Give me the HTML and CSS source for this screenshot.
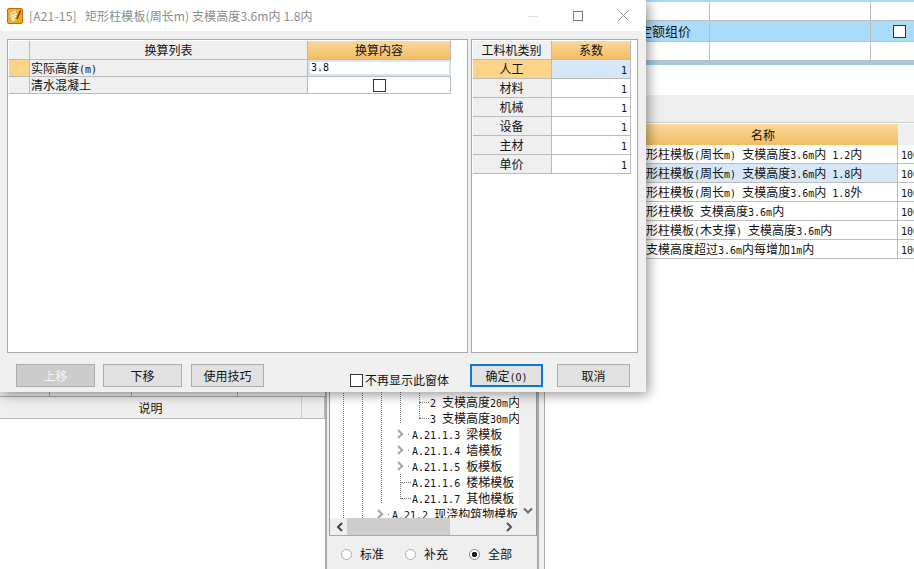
FILE: index.html
```html
<!DOCTYPE html>
<html lang="en">
<head>
    <meta charset="UTF-8">
    <title>换算</title>
    <link rel="stylesheet" href="styles.css">
</head>
<body>
<!-- windows behind the dialog -->
<div id="topWin">
    <div class="tRow"><span class="c1"></span><span class="c2"></span><span class="c3"></span></div>
    <div class="tRow sel"><span class="c1"><span class="clip">定额组价</span></span><span class="c2"></span><span class="c3"><i class="chk"></i></span></div>
    <div class="tRow"><span class="c1"></span><span class="c2"></span><span class="c3"></span></div>
</div>
<div id="greyBand"></div>
<div id="nameWin">
    <div class="nHead"><span class="nName">名称</span><span class="nVal"></span></div>
    <div class="nRow"><span class="nName">形柱模板<b>(</b>周长<b>m) </b>支模高度<b>3.6m</b>内<b> 1.2</b>内</span><span class="nVal"><b>100</b></span></div>
    <div class="nRow on"><span class="nName">形柱模板<b>(</b>周长<b>m) </b>支模高度<b>3.6m</b>内<b> 1.8</b>内</span><span class="nVal"><b>100</b></span></div>
    <div class="nRow"><span class="nName">形柱模板<b>(</b>周长<b>m) </b>支模高度<b>3.6m</b>内<b> 1.8</b>外</span><span class="nVal"><b>100</b></span></div>
    <div class="nRow"><span class="nName">形柱模板<b> </b>支模高度<b>3.6m</b>内</span><span class="nVal"><b>100</b></span></div>
    <div class="nRow"><span class="nName">形柱模板<b>(</b>木支撑<b>) </b>支模高度<b>3.6m</b>内</span><span class="nVal"><b>100</b></span></div>
    <div class="nRow"><span class="nName">支模高度超过<b>3.6m</b>内每增加<b>1m</b>内</span><span class="nVal"><b>100</b></span></div>
</div>
<div id="descWin">
    <div class="ticks"><span class="t1"></span><span class="t2"></span><span class="t3"></span></div>
    <div class="dHead"><span class="dMain">说明</span><span class="dEnd"></span></div>
</div>
<div id="treeWin">
    <div class="treeMain">
        <div class="treeBox">
            <div class="treeTop">
                <ul class="tree">
                    <li class="l5"><u></u><b>2 </b>支模高度<b>20m</b>内</li>
                    <li class="l5"><u></u><b>3 </b>支模高度<b>30m</b>内</li>
                    <li class="l4"><svg class="chev" width="13" height="10" viewBox="0 0 13 10"><path d="M1 1l4 4-4 4" fill="none" stroke="#aaa" stroke-width="2.4"/><rect x="11" y="5" width="1" height="1" fill="#777"/></svg><b>A.21.1.3 </b>梁模板</li>
                    <li class="l4"><svg class="chev" width="13" height="10" viewBox="0 0 13 10"><path d="M1 1l4 4-4 4" fill="none" stroke="#aaa" stroke-width="2.4"/><rect x="11" y="5" width="1" height="1" fill="#777"/></svg><b>A.21.1.4 </b>墙模板</li>
                    <li class="l4"><svg class="chev" width="13" height="10" viewBox="0 0 13 10"><path d="M1 1l4 4-4 4" fill="none" stroke="#aaa" stroke-width="2.4"/><rect x="11" y="5" width="1" height="1" fill="#777"/></svg><b>A.21.1.5 </b>板模板</li>
                    <li class="l4"><u></u><b>A.21.1.6 </b>楼梯模板</li>
                    <li class="l4"><u></u><b>A.21.1.7 </b>其他模板</li>
                    <li class="l3"><svg class="chev" width="13" height="10" viewBox="0 0 13 10"><path d="M1 1l4 4-4 4" fill="none" stroke="#aaa" stroke-width="2.4"/><rect x="11" y="5" width="1" height="1" fill="#777"/></svg><b>A.21.2 </b>现浇构筑物模板</li>
                    <li class="vl v1"></li>
                    <li class="vl v2"></li>
                    <li class="vl v3"></li>
                    <li class="vl v4"></li>
                    <li class="vl v5"></li>
                    <li class="vl v6"></li>
                </ul>
                <div class="vBar">
                    <svg width="10" height="8" viewBox="0 0 10 8"><path d="M1 1.5l4 4 4-4" fill="none" stroke="#666" stroke-width="2"/></svg>
                </div>
            </div>
            <div class="hBar">
                <svg width="10" height="10" viewBox="0 0 10 10"><path d="M7 1 3 5l4 4" fill="none" stroke="#444" stroke-width="2"/></svg>
                <div class="hThumb"></div>
                <svg width="10" height="10" viewBox="0 0 10 10"><path d="M3 1l4 4-4 4" fill="none" stroke="#555" stroke-width="2"/></svg>
            </div>
        </div>
        <div class="radios">
            <label><i class="rad"></i>标准</label>
            <label><i class="rad"></i>补充</label>
            <label><i class="rad on"></i>全部</label>
        </div>
    </div>
    <div class="treeSide"></div>
</div>

<div id="dialog">
    <div class="titleBar">
        <svg class="appIcon" width="16" height="16" viewBox="0 0 16 16">
            <rect x="0.5" y="0.5" width="15" height="15" rx="1.5" fill="#f2a91f" stroke="#b96f0c"/>
            <path d="M3 5.5l6-2.500M3 8.500l7-3M4 11l5-3M5 13l3-2" stroke="#f4f1e6" stroke-width="1.7" fill="none"/>
            <path d="M10 11 13.500 2.500" stroke="#7a3a10" stroke-width="1.6"/>
        </svg>
        <span class="code">[A21-15]</span>
        <span class="tText">矩形柱模板(周长m) 支模高度3.6m内 1.8内</span>
        <div class="winBtns">
            <svg width="10" height="10" viewBox="0 0 10 10"><path d="M0 5.500h10" stroke="#ddd"/></svg>
            <svg width="10" height="10" viewBox="0 0 10 10"><rect x="0.500" y="0.500" width="9" height="9" fill="none" stroke="#777"/></svg>
            <svg width="11" height="11" viewBox="0 0 11 11"><path d="M.5.5l10 10M10.500.5l-10 10" stroke="#888"/></svg>
        </div>
    </div>
    <div class="panels">
        <div class="panel leftP">
            <div class="gRow headRow">
                <span class="hd"></span><span class="cName">换算列表</span><span class="cVal orange">换算内容</span>
            </div>
            <div class="gRow">
                <span class="mark"></span><span class="cName left">实际高度<b>(m)</b></span><span class="cVal inputCell"><b>3.8</b></span>
            </div>
            <div class="gRow">
                <span class="hd"></span><span class="cName left">清水混凝土</span><span class="cVal"><i class="chk"></i></span>
            </div>
        </div>
        <div class="panel rightP">
            <div class="rRow"><span class="rName">工料机类别</span><span class="rVal rHeadVal orange">系数</span></div>
            <div class="rRow cur"><span class="rName">人工</span><span class="rVal"><b>1</b></span></div>
            <div class="rRow"><span class="rName">材料</span><span class="rVal"><b>1</b></span></div>
            <div class="rRow"><span class="rName">机械</span><span class="rVal"><b>1</b></span></div>
            <div class="rRow"><span class="rName">设备</span><span class="rVal"><b>1</b></span></div>
            <div class="rRow"><span class="rName">主材</span><span class="rVal"><b>1</b></span></div>
            <div class="rRow"><span class="rName">单价</span><span class="rVal"><b>1</b></span></div>
        </div>
    </div>
    <div class="btnRow">
        <button class="btn off">上移</button>
        <button class="btn">下移</button>
        <button class="btn skill">使用技巧</button>
        <label class="noShow"><i class="chk"></i>不再显示此窗体</label>
        <button class="btn ok">确定<b>(O)</b></button>
        <button class="btn cancel">取消</button>
    </div>
</div>
</body>
</html>
```

FILE: styles.css
```css
*{ box-sizing: border-box; }
html,body{ margin: 0; padding: 0; }
body{
    width: 914px;
    height: 569px;
    overflow: hidden;
    position: relative;
    background: #fff;
    color: #111;
    font: 12px/18px "Noto Sans CJK SC", sans-serif;
}
b{ font-family: "DejaVu Sans Mono", monospace; font-size: 10px; font-weight: normal; white-space: pre; }
i,u{ display: block; font-style: normal; text-decoration: none; }
span{ display: block; }

.chk{ width: 13px; height: 13px; border: 1px solid #333; background: #fff; flex: none; }
.orange{ background: linear-gradient(#fad99c,#f2bd62); }

/* windows behind */
#topWin{ position: absolute; left: 646px; top: 0; width: 268px; height: 65px; border-top: 2px solid #a9d8f5; border-bottom: 4px solid #9fcbe8; }
.tRow{ display: flex; height: 19px; border-bottom: 1px solid #bdbdbd; }
.tRow.sel{ height: 21px; background: #a9dbfa; }
.c1{ width: 63px; overflow: hidden; line-height: 20px; }
.clip{ white-space: nowrap; margin-left: -7px; font-size: 13px; }
.c2{ width: 161px; border-left: 1px solid #bdbdbd; }
.c3{ flex: 1; border-left: 1px solid #bdbdbd; display: flex; align-items: center; padding-left: 22px; }

#greyBand{ position: absolute; left: 646px; top: 95px; width: 268px; height: 28px; background: #efefef; border-bottom: 1px solid #ccc; }

#nameWin{ position: absolute; left: 646px; top: 124px; width: 268px; }
.nHead{ display: flex; height: 21px; }
.nHead .nName{ background: linear-gradient(#fad99c,#f2bd62); text-align: center; line-height: 21px; padding-right: 18px; border: 0; }
.nHead .nVal{ background: #efefef; }
.nRow{ display: flex; height: 19px; border-bottom: 1px solid #bdbdbd; line-height: 18px; }
.nRow.on .nName{ background: #d6e8f7; }
.nName{ width: 252px; flex: none; white-space: nowrap; overflow: hidden; border-right: 1px solid #bdbdbd; }
.nVal{ flex: 1; padding-left: 3px; overflow: hidden; }

#descWin{ position: absolute; left: 0; top: 392px; width: 325px; height: 27px; }
.ticks{ display: flex; height: 4px; background: #efefef; border-bottom: 0; }
.ticks span{ border-right: 1px solid #aaa; }
.t1{ width: 50px; }
.t2{ width: 82px; }
.t3{ width: 106px; }
.dHead{ display: flex; height: 23px; background: #efefef; border-top: 1px solid #aaa; border-bottom: 1px solid #bbb; line-height: 21px; font-size: 12px; }
.dMain{ width: 302px; text-align: center; border-right: 1px solid #ccc; }
.dEnd{ flex: 1; border-right: 1px solid #bbb; }

#treeWin{ position: absolute; left: 325px; top: 385px; width: 220px; height: 184px; display: flex; background: #efefef; }
.treeMain{ width: 214px; border-left: 2px solid #aaa; border-right: 2px solid #aaa; padding: 0 0 0 2px; }
.treeSide{ flex: 1; border-right: 1px solid #aaa; }
.treeBox{ height: 151px; width: 208px; margin-left: 0; background: #efefef; border-left: 1px solid #999; border-right: 1px solid #999; border-bottom: 1px solid #aaa; display: flex; flex-direction: column; }
.treeTop{ display: flex; height: 133px; }
.tree{ list-style: none; margin: 0; padding: 9px 0 0; flex: none; width: 189px; height: 133px; overflow: hidden; background: #fff; position: relative; }
.tree li{ height: 16px; line-height: 16px; white-space: nowrap; position: relative; }
.l5{ padding-left: 100px; }
.l4{ padding-left: 82px; }
.l3{ padding-left: 62px; }
.chev{ position: absolute; margin: 3px 0 0 -15px; }
.tree u{ position: absolute; width: 10px; margin: 8px 0 0 -11px; border-top: 1px dotted #777; }
.tree .vl{ position: absolute; width: 0; height: auto; border-left: 1px dotted #777; }
.tree .v1{ left: 13px; top: 0; height: 133px; }
.tree .v2{ left: 32px; top: 0; height: 133px; }
.tree .v3{ left: 51px; top: 0; height: 118px; }
.tree .v4{ left: 70px; top: 0; height: 38px; }
.tree .v5{ left: 70px; top: 89px; height: 25px; }
.tree .v6{ left: 89px; top: 0; height: 33px; }
.vBar{ flex: 1; display: flex; justify-content: center; align-items: flex-end; padding-bottom: 3px; }
.hBar{ height: 17px; display: flex; align-items: center; padding: 0 0 0 5px; }
.hThumb{ width: 103px; height: 17px; background: #cdcdcd; margin: 0 54px 0 2px; }
.radios{ display: flex; padding: 9px 0 0 12px; gap: 21px; }
.radios label{ display: flex; align-items: center; gap: 8px; line-height: 18px; }
.rad{ width: 11px; height: 11px; border-radius: 50%; border: 1px solid #aaa; background: #fff; }
.rad.on{ border-color: #888; background: radial-gradient(circle,#222 0 2.5px,#fff 3px); }

/* main dialog */
#dialog{ position: absolute; left: 0; top: 0; width: 646px; height: 392px; background: #f0f0f0; box-shadow: 2px 2px 12px rgba(0,0,0,.45); }
.titleBar{ height: 31px; background: #fff; display: flex; align-items: center; padding-left: 7px; color: #8c8c8c; }
.appIcon{ flex: none; margin-right: 6px; }
.code{ width: 56px; letter-spacing: .2px; }
.tText{ white-space: nowrap; letter-spacing: .1px; }
.winBtns{ margin-left: auto; display: flex; align-items: center; gap: 35px; padding-right: 17px; }
.panels{ display: flex; gap: 3px; padding: 8px 8px 0 7px; height: 322px; }
.panel{ background: #fff; border: 1px solid #aaa; height: 314px; padding: 1px 1px 0; }
.leftP{ width: 461px; }
.rightP{ width: 167px; }
.gRow{ display: flex; width: 442px; height: 17px; border-bottom: 1px solid #bbb; line-height: 16px; }
.gRow.headRow{ height: 19px; line-height: 18px; }
.hd{ background: #efefef; }
.gRow > span:first-child{ width: 21px; border-right: 1px solid #bbb; }
.mark{ background: #fdd388; }
.gRow > .cName{ width: 278px; text-align: center; border-right: 1px solid #bbb; background: #efefef; }
.gRow > .cName.left{ text-align: left; padding-left: 1px; }
.cVal{ width: 143px; text-align: center; display: flex; align-items: center; justify-content: center; border-right: 1px solid #bbb; }
.inputCell{ justify-content: flex-start; padding-left: 1px; border: 2px solid #d3e5f5; }
.rRow{ display: flex; width: 158px; height: 19px; border-bottom: 1px solid #bbb; line-height: 18px; }
.rName{ width: 79px; padding-right: 1px; text-align: center; background: #efefef; border-right: 1px solid #bbb; }
.rVal{ width: 79px; text-align: right; padding-right: 3px; border-right: 1px solid #bbb; }
.rHeadVal{ text-align: center; padding: 0; }
.rRow.cur .rName{ background: #fdd388; }
.rRow.cur .rVal{ background: #d6e8f7; }

.btnRow{ display: flex; align-items: flex-start; padding: 11px 0 0 16px; }
.btn{ width: 79px; height: 23px; padding: 0; border: 1px solid #adadad; background: #e1e1e1; color: #111; font: 12px/20px "Noto Sans CJK SC", sans-serif; margin-right: 8px; flex: none; }
.btn.off{ background: #ccc; color: #f4f4f4; }
.btn.skill{ width: 73px; margin-left: 1px; margin-right: 0; }
.noShow{ display: flex; align-items: center; gap: 2px; margin: 9px 0 0 86px; width: 120px; white-space: nowrap; height: 14px; }
.btn.ok{ width: 73px; border: 2px solid #0a78d7; margin-right: 14px; }
.btn.cancel{ width: 73px; margin: 0; }
```
